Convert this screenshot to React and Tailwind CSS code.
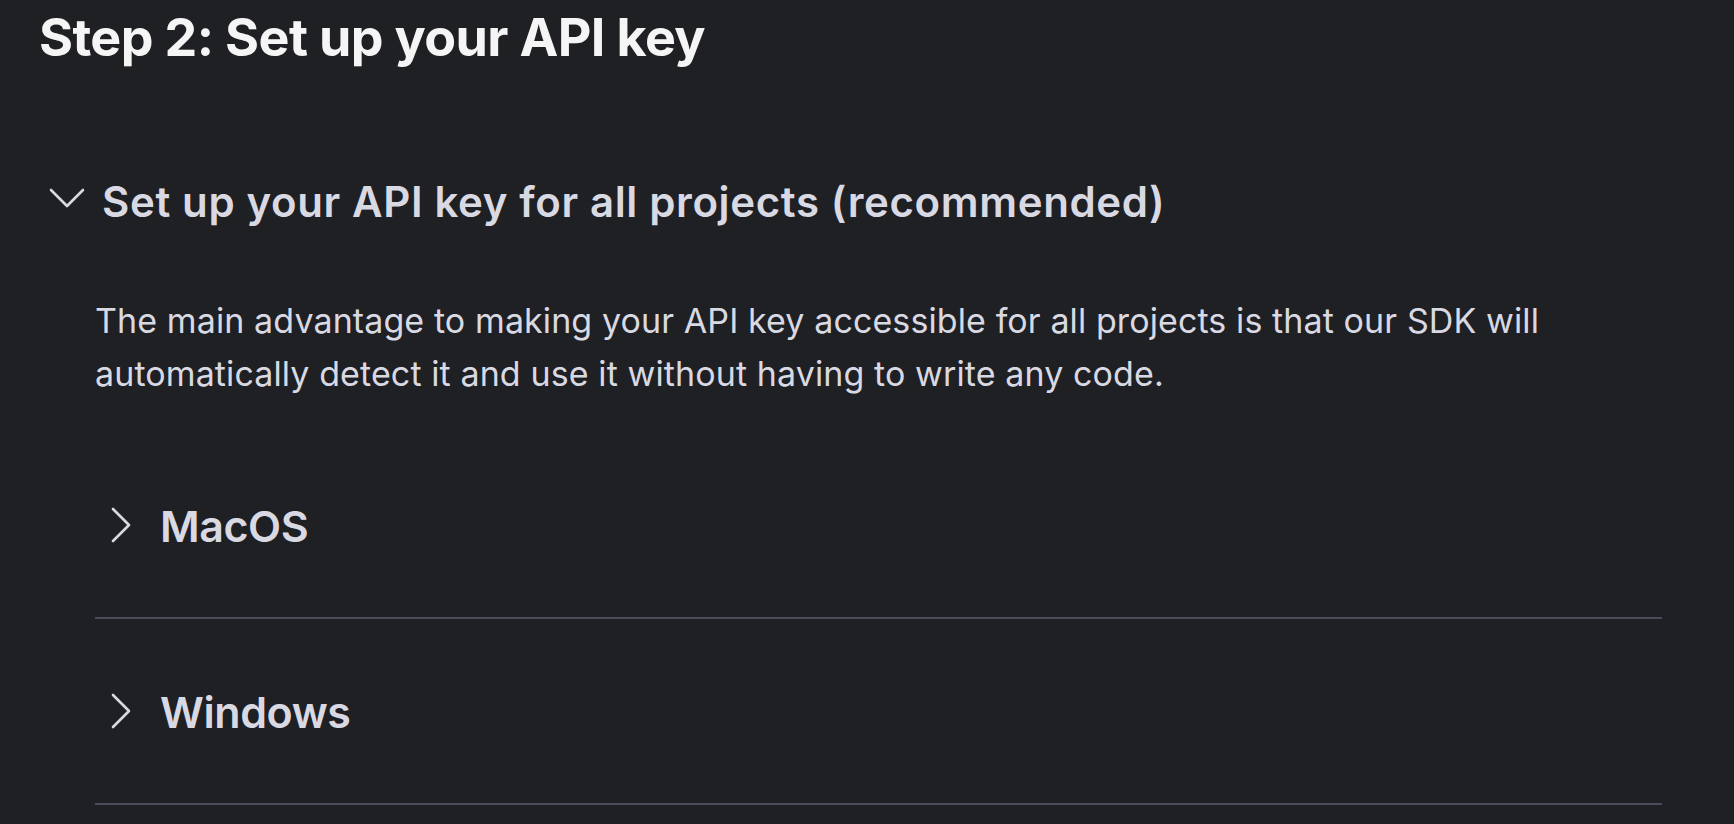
import React from "react";

const ChevronDown = () => (
  <svg width="36" height="21" viewBox="0 0 36 21" fill="none" className="shrink-0 mt-[10px]">
    <polyline points="2,2 18,18 34,2" stroke="#d9d9e3" strokeWidth="2.6" strokeLinecap="round" strokeLinejoin="round" />
  </svg>
);

const ChevronRight = () => (
  <svg width="22" height="36" viewBox="0 0 22 36" fill="none" className="shrink-0 mt-[7px]">
    <polyline points="3,2 19,18 3,34" stroke="#d9d9e3" strokeWidth="2.6" strokeLinecap="round" strokeLinejoin="round" />
  </svg>
);

const OsItem = ({ label, first }) => (
  <div className={first ? "pt-[69px] pb-[65px] border-b-2 border-[#4b4b5c]" : "pt-[67px] pb-[65px] border-b-2 border-[#4b4b5c]"}>
    <button className="flex items-start gap-[28px] pl-[15px] text-left">
      <ChevronRight />
      <span className="text-[43px] leading-[52px] font-semibold text-[#d9d9e3] tracking-[-0.01em]">{label}</span>
    </button>
  </div>
);

export default function App() {
  return (
    <div className="min-h-screen bg-[#1f2023] font-['Inter',sans-serif] overflow-hidden">
      <div className="pl-[39px] pr-[72px]">
        <h1 className="pt-[6px] text-[52px] leading-[64px] font-bold text-[#f5f5f5] tracking-[-0.012em]">
          Step 2: Set up your API key
        </h1>

        <div className="mt-[108px] flex items-start gap-[17px] pl-[10px]">
          <ChevronDown />
          <h2 className="text-[42px] leading-[48px] font-semibold text-[#d9d9e3] tracking-[0.015em]">
            Set up your API key for all projects (recommended)
          </h2>
        </div>

        <div className="pl-[56px]">
          <p className="mt-[68px] text-[34px] leading-[53px] text-[#d9d9e3] tracking-[0.003em]">
            The main advantage to making your API key accessible for all projects is that our SDK will automatically detect it and use it without having to write any code.
          </p>

          <div className="mt-[31px]">
            <OsItem label="MacOS" first />
            <OsItem label="Windows" />
          </div>
        </div>
      </div>
    </div>
  );
}
